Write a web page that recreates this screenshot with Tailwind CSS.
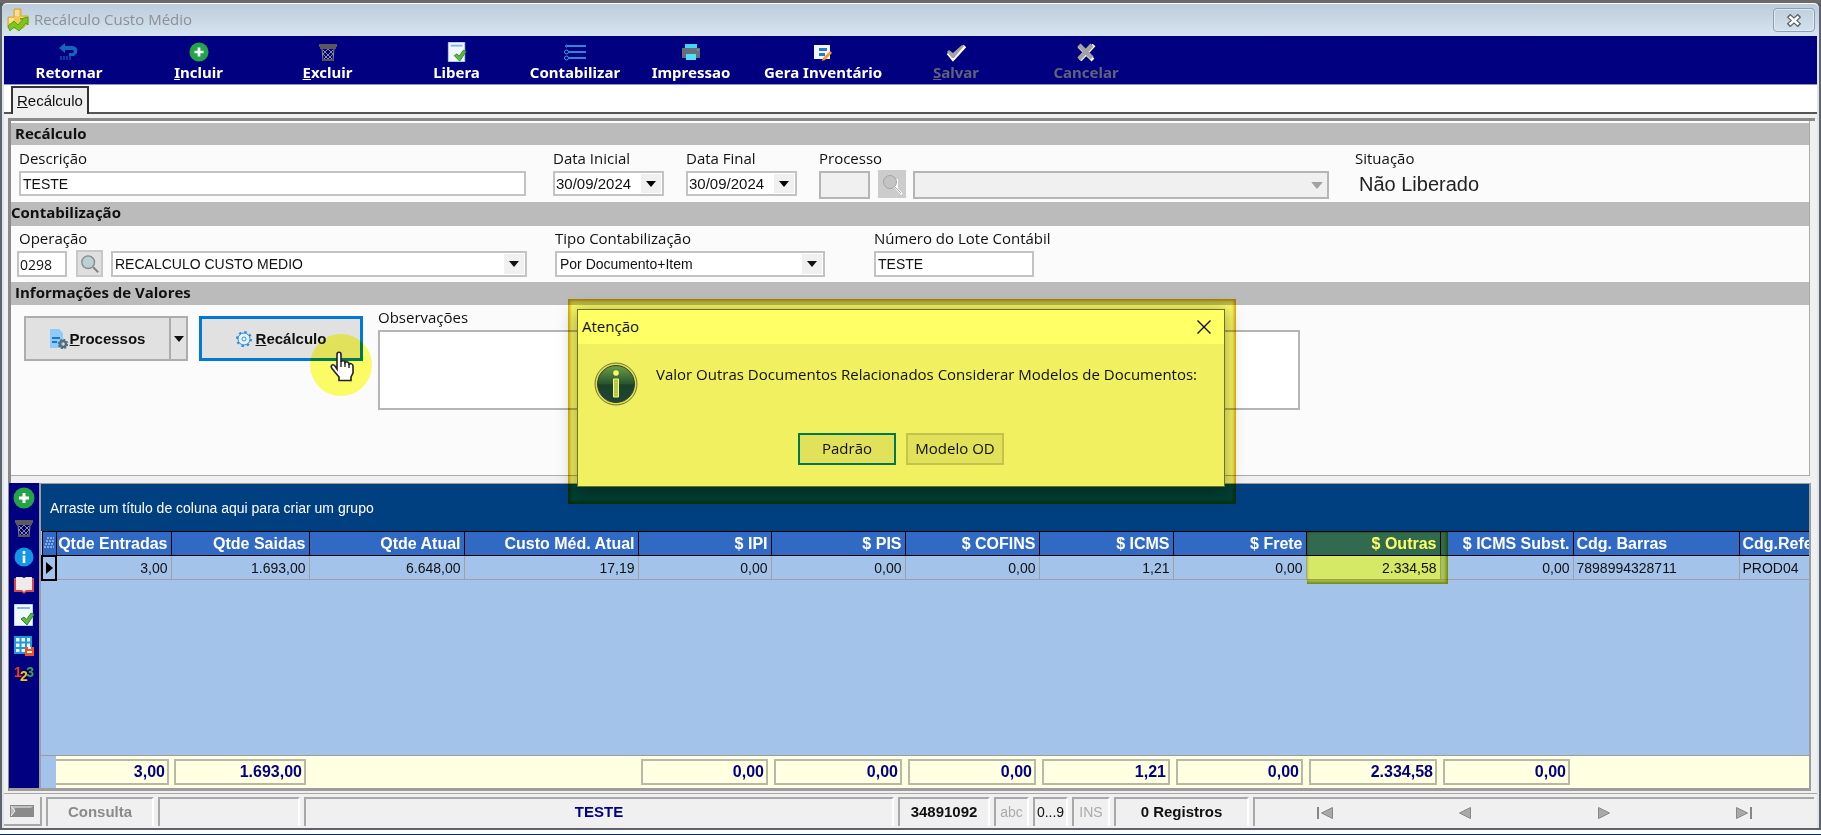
<!DOCTYPE html>
<html lang="pt-BR">
<head>
<meta charset="utf-8">
<meta name="viewport" content="width=device-width, initial-scale=1">
<title>Recálculo Custo Médio</title>
<script src="https://cdn.jsdelivr.net/npm/@tailwindcss/browser@4"></script>
</head>
<body class="bg-[#5d5d5d] font-['Liberation_Sans',sans-serif] text-sm text-[#101010]">

<svg class="hidden" aria-hidden="true">
  <symbol id="i-plus" viewBox="0 0 22 22"><circle cx="11" cy="11" r="10.5" fill="#22a447"/><path d="M11 6v10M6 11h10" stroke="#fff" stroke-width="3"/></symbol>
  <symbol id="i-bin" viewBox="0 0 20 20"><path d="M1 2h18v3h-1v2H2V5H1z" fill="#5a5a5a"/><path d="M4 7l1 11h10l1-11M5 8l9 9M15 8l-9 9M10 7l-5 5 5 5 5-5z" fill="none" stroke="#8c8c8c" stroke-width="1"/><path d="M4 18h12" stroke="#555" stroke-width="2"/></symbol>
  <symbol id="i-doc" viewBox="0 0 20 22"><path d="M.5.5h18v21H.5z" fill="#f2f8fd" stroke="#b5d5f0"/><path d="M3 4h13" stroke="#7db8ea" stroke-width="2"/><path d="M7 15l3-2 2.500 2.500L17 9l3 1.500-7 10.500z" fill="#5cb845" stroke="#2c8a25"/></symbol>
  <symbol id="i-lens" viewBox="0 0 22 22"><circle cx="9" cy="9" r="7" fill="#bcd0d2" stroke="#858c8e" stroke-width="1.500"/><path d="M14.500 14.500L20 20" stroke="#7c8486" stroke-width="2.200"/></symbol>
  <symbol id="i-down" viewBox="0 0 10 6"><path d="M0 0h10L5 6z" fill="currentColor"/></symbol>
  <symbol id="i-prev" viewBox="0 0 12 12"><path d="M11.500.5v11L.5 6z" fill="#a9a9a9" stroke="#878787"/></symbol>
</svg>

<div class="relative flex h-screen min-h-[780px] flex-col overflow-hidden border-t-[3px] border-[#6a6a6a]">
 <main class="flex min-h-0 flex-1 flex-col rounded-t-md border-x-2 border-b-2 border-[#60646a] bg-[#dbe5f0]">

  <header class="flex h-[33px] shrink-0 items-center rounded-t-md border-t border-white bg-linear-to-b from-[#bdccdb] to-[#d7e4f0] pl-1 pr-1">
    <svg class="h-6 w-6" viewBox="0 0 24 24"><path d="M8 1h7v7h7v7l-5 5H2V9h6z" fill="#f4c65a" stroke="#dca332"/><path d="M9 2h4v6H9zM3 10h5v5H3zM15 9h5v4h-5z" fill="#fbe092"/><path d="M2 18l6-5 4 4 5-6h-3l8-2v8l-2-2-7 8-5-4-4 4z" fill="#7bc51c" stroke="#5aa012"/></svg>
    <h1 class="ml-1 font-['Open_Sans',sans-serif] text-[15px] text-[#8b9096]">Recálculo Custo Médio</h1>
    <button aria-label="Fechar janela" class="ml-auto flex h-6 w-[42px] items-center justify-center rounded-sm border border-[#8e9fb5] shadow-[inset_0_0_0_1px_#dfe9f4]">
      <svg class="h-[13px] w-4" viewBox="0 0 16 13"><path d="M2.500 1.500l11 10M13.500 1.500l-11 10" stroke="#5a626e" stroke-width="5"/><path d="M3.500 2.500l9 8M12.500 2.500l-9 8" stroke="#fff" stroke-width="2.400"/></svg>
    </button>
  </header>

  <div class="mx-[2px] flex min-h-0 flex-1 flex-col bg-[#f0f0f0]">
  <nav aria-label="Ações" class="flex h-12 shrink-0 bg-[#000080] font-['Noto_Sans',sans-serif] text-[15px] font-bold text-white">
    <button class="flex w-[130px] flex-col items-center pt-[6px] leading-5"><svg class="h-5 w-5" viewBox="0 0 20 20"><path d="M6 1v3h7c5 0 6 4 5 7l-3 3H10v-3h4c1.500-1 1-3-1-3H6v3L0 6z" fill="#1565b8"/><path d="M2 14v4M5 14v4M8 14v4M11 14v4" stroke="#1565b8" stroke-width="1.200"/></svg>Retornar</button>
    <button class="flex w-[129px] flex-col items-center pt-[6px] leading-5"><svg class="h-5 w-5"><use href="#i-plus"/></svg><span><u>I</u>ncluir</span></button>
    <button class="flex w-[129px] flex-col items-center pt-[6px] leading-5"><svg class="h-5 w-5"><use href="#i-bin"/></svg><span><u>E</u>xcluir</span></button>
    <button class="flex w-[129px] flex-col items-center pt-[6px] leading-5"><svg class="h-5 w-5"><use href="#i-doc"/></svg>Libera</button>
    <button class="flex w-[108px] flex-col items-center pt-[6px] leading-5"><svg class="h-5 w-[22px]" viewBox="0 0 22 20"><path d="M2 4h20M5 10h17M5 16h17" stroke="#2e86d4" stroke-width="2"/><g fill="#000080" stroke="#4aa0e6"><circle cx="2.500" cy="4" r="1"/><circle cx="2.500" cy="10" r="2"/><circle cx="2.500" cy="16" r="2"/></g></svg>Contabilizar</button>
    <button class="flex w-[124px] flex-col items-center pt-[6px] leading-5"><svg class="h-5 w-5" viewBox="0 0 20 20"><path d="M4 2h12v4H4z" fill="#45d5f7"/><path d="M1 6h18v10H1z" fill="#66707a"/><path d="M5 12h10v6H5z" fill="#50e0fb"/><path d="M16 8h1.500" stroke="#45d5f7"/></svg>Impressao</button>
    <button class="flex w-[140px] flex-col items-center pt-[6px] leading-5"><svg class="h-5 w-5" viewBox="0 0 20 20"><path d="M1 3h16v14H1z" fill="#f3f7fc"/><path d="M6 6h8v3H6zM6 11h6v3H6z" fill="#1f7ad6"/><path d="M17 9l2 2-7 7-3 1 1-3z" fill="#ff9a1f"/></svg>Gera Inventário</button>
    <button disabled class="flex w-[126px] flex-col items-center pt-[6px] leading-5 text-[#616178]"><svg class="h-5 w-5" viewBox="0 0 20 20"><path d="M2 11l5 6L19 4" fill="none" stroke="#fff" stroke-width="3.500"/><path d="M1 10l2-2 4 3L16 3l2 1L8 16H6z" fill="#a3a3a3"/></svg><span><u>S</u>alvar</span></button>
    <button disabled class="flex w-[134px] flex-col items-center pt-[6px] leading-5 text-[#616178]"><svg class="h-5 w-5" viewBox="0 0 20 20"><path d="M3 4l14 14M18 3L4 18" stroke="#fff" stroke-width="4"/><path d="M3 3l13 13M16 3L3 17" stroke="#a3a3a3" stroke-width="4.500"/></svg>Cancelar</button>
  </nav>

  <div role="tablist" class="flex h-[30px] shrink-0 items-end border-b-2 border-[#555] border-t border-t-[#8f8fd6] bg-white pl-[7px]">
    <button role="tab" aria-selected="true" class="relative top-[2px] h-[28px] border-2 border-b-0 border-[#333] bg-[#f0f0f0] px-1 text-[15px]"><u>R</u>ecálculo</button>
  </div>

  <div class="mt-1 mr-[2px] ml-1 flex min-h-0 flex-1 flex-col border-t-[3px] border-l-[3px] border-[#8b8b8b]">
   <section class="mr-[5px] shrink-0 border-r border-b border-[#ababab] bg-[#fbfbfb] font-['Open_Sans',sans-serif] text-[15px]">
    <h2 class="mt-[2px] h-[22px] bg-[#bbb] pl-1 font-bold leading-5">Recálculo</h2>
    <div class="flex h-[57px] items-start pt-[2px] pl-2 leading-[22px]">
      <div class="w-[507px]"><label for="desc" class="block">Descrição</label>
        <input id="desc" value="TESTE" class="mt-[2px] h-[25px] w-full border-2 border-[#c3c3c3] bg-white px-[2px] font-['Liberation_Sans',sans-serif] text-sm"></div>
      <div class="ml-[27px] w-[111px]"><label for="di" class="block">Data Inicial</label>
        <div class="mt-[2px] flex h-[25px] border-2 border-[#c3c3c3] bg-white p-px"><input id="di" value="30/09/2024" class="w-[85px] font-['Liberation_Sans',sans-serif] text-[15px]"><button aria-label="Abrir data inicial" class="flex flex-1 items-center justify-center bg-[#f0f0f0]"><svg class="h-[6px] w-[10px] text-black"><use href="#i-down"/></svg></button></div></div>
      <div class="ml-[22px] w-[111px]"><label for="df" class="block">Data Final</label>
        <div class="mt-[2px] flex h-[25px] border-2 border-[#c3c3c3] bg-white p-px"><input id="df" value="30/09/2024" class="w-[85px] font-['Liberation_Sans',sans-serif] text-[15px]"><button aria-label="Abrir data final" class="flex flex-1 items-center justify-center bg-[#f0f0f0]"><svg class="h-[6px] w-[10px] text-black"><use href="#i-down"/></svg></button></div></div>
      <div class="ml-[22px] w-[510px]"><label for="proc" class="block">Processo</label>
        <div class="mt-px flex items-start"><input id="proc" disabled class="mt-px h-7 w-[51px] border-2 border-[#b5b5b5] bg-[#f0f0f0]">
        <button disabled aria-label="Buscar processo" class="ml-2 flex h-7 w-7 items-center justify-center bg-[#ccc]"><svg class="h-[22px] w-[22px]" viewBox="0 0 22 22"><path d="M16 6v8H9M15 15l6 6" fill="none" stroke="#fff" stroke-width="2"/><circle cx="9" cy="9" r="6.500" fill="#c4c4c4" stroke="#a5a5a5"/><path d="M14 14l6 6" stroke="#a5a5a5"/></svg></button>
        <div class="relative mt-px ml-[7px] flex-1"><select disabled aria-label="Nome do processo" class="h-7 w-full appearance-none border-2 border-[#b5b5b5] bg-[#f0f0f0]"></select><svg class="absolute top-[11px] right-[6px] h-[7px] w-3 text-[#a2a2a2]"><use href="#i-down"/></svg></div></div></div>
      <div class="ml-[26px]"><span class="block">Situação</span>
        <output class="mt-px ml-1 block w-[122px] overflow-hidden whitespace-nowrap font-['Liberation_Sans',sans-serif] text-xl leading-7 text-[#222]">Não Liberado</output></div>
    </div>

    <h2 class="h-6 bg-[#bbb] font-bold leading-5">Contabilização</h2>
    <div class="flex h-14 items-start pt-px pl-[6px] leading-[22px]">
      <div class="w-[510px]"><label for="op" class="block pl-[2px]">Operação</label>
        <div class="mt-px flex items-start"><input id="op" value="0298" class="mt-px h-[26px] w-[50px] border-2 border-[#c3c3c3] bg-white px-px text-sm">
        <button aria-label="Buscar operação" class="ml-[9px] flex h-[27px] w-[27px] items-center justify-center border-2 border-[#c8c8c8] bg-[#dfdfdf]"><svg class="h-5 w-5"><use href="#i-lens"/></svg></button>
        <div class="relative mt-px ml-2 flex-1"><select aria-label="Nome da operação" class="h-[26px] w-full appearance-none border-2 border-[#c3c3c3] bg-white px-[2px] font-['Liberation_Sans',sans-serif] text-sm"><option>RECALCULO CUSTO MEDIO</option></select><span class="pointer-events-none absolute top-[3px] right-[3px] flex h-5 w-5 items-center justify-center bg-[#f0f0f0]"><svg class="h-[6px] w-[10px]"><use href="#i-down"/></svg></span></div></div></div>
      <div class="ml-[28px] w-[270px]"><label for="tipo" class="block">Tipo Contabilização</label>
        <div class="relative mt-[2px]"><select id="tipo" class="h-[26px] w-full appearance-none border-2 border-[#c3c3c3] bg-white px-[3px] font-['Liberation_Sans',sans-serif] text-sm"><option>Por Documento+Item</option></select><span class="pointer-events-none absolute top-[3px] right-[3px] flex h-5 w-5 items-center justify-center bg-[#f0f0f0]"><svg class="h-[6px] w-[10px]"><use href="#i-down"/></svg></span></div></div>
      <div class="ml-[49px]"><label for="lote" class="block">Número do Lote Contábil</label>
        <input id="lote" value="TESTE" class="mt-[2px] h-[26px] w-[160px] border-2 border-[#c3c3c3] bg-white px-[2px] font-['Liberation_Sans',sans-serif] text-sm"></div>
    </div>

    <h2 class="h-[23px] bg-[#bbb] pl-1 font-bold leading-5">Informações de Valores</h2>
    <div class="flex h-[170px] items-start pl-[13px]">
      <div class="mt-[11px] flex h-[45px] w-[164px] border-2 border-[#adadad] bg-[#e1e1e1] font-['Liberation_Sans',sans-serif] text-[15px] font-bold">
        <button class="flex flex-1 items-center justify-center"><svg class="h-5 w-[18px]" viewBox="0 0 18 20"><path d="M0 0h9l4 4v15H0z" fill="#90caf9"/><path d="M2 9h8M2 13h5" stroke="#1976d2" stroke-width="2"/><circle cx="13" cy="15" r="3" fill="none" stroke="#546e7a" stroke-width="2.500"/><circle cx="13" cy="15" r="4.500" fill="none" stroke="#546e7a" stroke-width="1.500" stroke-dasharray="2 1.500"/></svg><span class="ml-[2px]"><u>P</u>rocessos</span></button>
        <button aria-label="Mais processos" class="flex w-[17px] items-center justify-center border-l-2 border-[#adadad]"><svg class="h-[6px] w-[10px]"><use href="#i-down"/></svg></button>
      </div>
      <div class="relative ml-[11px]">
        <button class="mt-[11px] flex h-[45px] w-[164px] items-center justify-center border-[3px] border-[#0078d7] bg-[#e1e1e1] font-['Liberation_Sans',sans-serif] text-[15px] font-bold"><svg class="mr-1 h-4 w-4" viewBox="0 0 16 16"><circle cx="8" cy="8" r="6" fill="#e4f2fc" stroke="#2d8de0" stroke-width="1"/><circle cx="8" cy="8" r="7" fill="none" stroke="#2d8de0" stroke-width="2" stroke-dasharray="2.500 3"/><circle cx="8" cy="8" r="2" fill="#fff" stroke="#2d8de0"/></svg><span><u>R</u>ecálculo</span></button>
        <div class="absolute top-[29px] left-[111px] h-[62px] w-[62px] rounded-full bg-[#ffff66] mix-blend-multiply"></div>
        <svg class="absolute top-[46px] left-[131px] h-[31px] w-6" viewBox="0 0 24 31"><path d="M7 18V3.500C7 .5 11 .5 11 3.500V11c1-2 4-1.500 4 .5 1.500-1.500 4-.5 4 1.500 1.500-1 4 0 4 2v7l-2 4v3.500H9V26L2 17.500c-2-3 1-5 3-2.500z" fill="#fff" stroke="#222" stroke-width="1.600"/><path d="M11 10v6M15 11v5M19 13v4" stroke="#222" stroke-width="1.400"/></svg>
      </div>
      <div class="ml-[15px] w-[922px] pt-px"><label for="obs" class="block leading-[22px]">Observações</label>
        <textarea id="obs" class="mt-[2px] block h-20 w-full resize-none border-2 border-[#b5b5b5] bg-white"></textarea></div>
    </div>
   </section>

   <div class="mt-[7px] mr-1 -ml-[2px] flex min-h-0 flex-1 border-r-2 border-b-[3px] border-[#9d9d9d]">
    <aside class="flex w-[30px] shrink-0 flex-col items-center gap-2 bg-[#000080] pt-1">
      <button aria-label="Incluir" class="h-[22px]"><svg class="h-[22px] w-[22px]"><use href="#i-plus"/></svg></button>
      <button aria-label="Excluir" class="flex h-[22px] items-center"><svg class="h-5 w-5"><use href="#i-bin"/></svg></button>
      <button aria-label="Informação" class="h-5"><svg class="h-5 w-5" viewBox="0 0 20 20"><circle cx="10" cy="10" r="9.500" fill="#1496e6"/><path d="M10 4v3M10 8.500V16" stroke="#fff" stroke-width="2.600"/></svg></button>
      <button aria-label="Livro" class="h-5"><svg class="h-5 w-5" viewBox="0 0 20 20"><path d="M0 3h20v14h-8l-2 2-2-2H0z" fill="#d44a4a"/><path d="M2 2h6l2 1 2-1h6v13h-6l-2 2-2-2H2z" fill="#efebe9"/></svg></button>
      <button aria-label="Liberar" class="h-6"><svg class="h-[22px] w-5"><use href="#i-doc"/></svg></button>
      <button aria-label="Salvar grade" class="h-[22px]"><svg class="h-5 w-5" viewBox="0 0 20 20"><path d="M1 1h16v16H1z" fill="#e8f5fc"/><path d="M1 1h16v16H1zM6.500 1v16M12 1v16M1 6.500h16M1 12h16" fill="none" stroke="#2196d8" stroke-width="2"/><path d="M11 11h9v9h-9z" fill="#f4511e"/><path d="M13 16h5M14 12h3" stroke="#fff" stroke-width="2"/></svg></button>
      <button aria-label="Ordenar" class="relative h-5 w-5 text-[14px] font-bold leading-none"><span class="absolute top-0 left-0 text-[#ff3d00]">1</span><span class="absolute top-0 right-0 text-[#43a047]">3</span><span class="absolute top-1 left-1.5 text-[#ffc107]">2</span></button>
    </aside>

    <div class="flex min-w-0 flex-1 flex-col overflow-hidden border-t border-l-2 border-[#9d9d9d] bg-[#a4c3eb]">
      <div class="flex h-[47px] shrink-0 items-center bg-[#004080] pl-[9px] text-white">Arraste um título de coluna aqui para criar um grupo</div>
      <table class="w-full shrink-0 table-fixed border-collapse text-right">
        <colgroup><col class="w-[14px]"><col class="w-[115px]"><col class="w-[138px]"><col class="w-[155px]"><col class="w-[174px]"><col class="w-[133px]"><col class="w-[134px]"><col class="w-[134px]"><col class="w-[134px]"><col class="w-[133px]"><col class="w-[134px]"><col class="w-[133px]"><col class="w-[166px]"><col></colgroup>
        <thead><tr class="h-6 whitespace-nowrap bg-[#316ac5] text-[16px] leading-[22px] text-white">
          <th class="border border-black p-0" aria-label="Indicador"><svg class="mx-auto h-[14px] w-[10px]" viewBox="0 0 10 14"><path d="M3 2h7M2 5h8M1 8h9M0 11h10" stroke="#dce8ff" stroke-dasharray="2 1"/></svg></th>
          <th class="border border-black p-0 pr-[3px]">Qtde Entradas</th><th class="border border-black p-0 pr-[3px]">Qtde Saidas</th><th class="border border-black p-0 pr-[3px]">Qtde Atual</th><th class="border border-black p-0 pr-[3px]">Custo Méd. Atual</th><th class="border border-black p-0 pr-[3px]">$ IPI</th><th class="border border-black p-0 pr-[3px]">$ PIS</th><th class="border border-black p-0 pr-[3px]">$ COFINS</th><th class="border border-black p-0 pr-[3px]">$ ICMS</th><th class="border border-black p-0 pr-[3px]">$ Frete</th>
          <th class="relative border border-black p-0 pr-[3px]">$ Outras<span class="absolute top-0 left-0 h-[52px] w-[141px] bg-[#ffff66] shadow-[inset_-1px_-1px_3px_1px_#b8b000] mix-blend-multiply"></span></th>
          <th class="border border-black p-0 pr-[3px]">$ ICMS Subst.</th><th class="border border-black p-0 pl-[3px] text-left">Cdg. Barras</th><th class="border border-r-0 border-black p-0 pl-[3px] text-left">Cdg.Refe</th>
        </tr></thead>
        <tbody><tr class="h-6 leading-5">
          <td class="border-2 border-black p-0"><svg class="mx-auto h-3 w-[7px]" viewBox="0 0 7 12"><path d="M0 0l7 6-7 6z"/></svg></td>
          <td class="border border-[#a0a0a0] p-0 pr-[3px]">3,00</td><td class="border border-[#a0a0a0] p-0 pr-[3px]">1.693,00</td><td class="border border-[#a0a0a0] p-0 pr-[3px]">6.648,00</td><td class="border border-[#a0a0a0] p-0 pr-[3px]">17,19</td><td class="border border-[#a0a0a0] p-0 pr-[3px]">0,00</td><td class="border border-[#a0a0a0] p-0 pr-[3px]">0,00</td><td class="border border-[#a0a0a0] p-0 pr-[3px]">0,00</td><td class="border border-[#a0a0a0] p-0 pr-[3px]">1,21</td><td class="border border-[#a0a0a0] p-0 pr-[3px]">0,00</td><td class="border border-[#a0a0a0] bg-[#d6e9ff] p-0 pr-[3px]">2.334,58</td><td class="border border-[#a0a0a0] p-0 pr-[3px]">0,00</td><td class="border border-[#a0a0a0] p-0 pl-[3px] text-left">7898994328711</td><td class="border border-r-0 border-[#a0a0a0] p-0 pl-[3px] text-left">PROD04</td>
        </tr></tbody>
      </table>
      <div class="mt-auto flex h-[33px] shrink-0 items-stretch border-t border-[#9d9d9d] bg-[#ffffe1] text-right text-[16px] font-bold leading-[21px] text-[#000080]">
        <div class="w-[15px] bg-[#a4c3eb]"></div>
        <div class="w-[115px] py-[3px] pr-[2px]"><div class="h-[26px] border-2 border-l-0 border-[#b8b8a8] pr-[2px]">3,00</div></div>
        <div class="w-[138px] px-[3px] py-[3px]"><div class="h-[26px] border-2 border-[#b8b8a8] pr-[2px]">1.693,00</div></div>
        <div class="w-[329px]"></div>
        <div class="w-[133px] p-[3px]"><div class="h-[26px] border-2 border-[#b8b8a8] pr-[2px]">0,00</div></div>
        <div class="w-[134px] p-[3px]"><div class="h-[26px] border-2 border-[#b8b8a8] pr-[2px]">0,00</div></div>
        <div class="w-[134px] p-[3px]"><div class="h-[26px] border-2 border-[#b8b8a8] pr-[2px]">0,00</div></div>
        <div class="w-[134px] p-[3px]"><div class="h-[26px] border-2 border-[#b8b8a8] pr-[2px]">1,21</div></div>
        <div class="w-[133px] p-[3px]"><div class="h-[26px] border-2 border-[#b8b8a8] pr-[2px]">0,00</div></div>
        <div class="w-[134px] p-[3px]"><div class="h-[26px] border-2 border-[#b8b8a8] pr-[2px]">2.334,58</div></div>
        <div class="w-[133px] p-[3px]"><div class="h-[26px] border-2 border-[#b8b8a8] pr-[2px]">0,00</div></div>
      </div>
    </div>
   </div>
  </div>

  <footer class="mt-[2px] flex h-[35px] shrink-0 gap-1 border-t border-[#a8a8a8] pt-[3px] pb-[2px] text-center text-[15px] leading-[26px]">
    <button aria-label="Painel" class="flex w-[38px] items-center justify-center border-r-2 border-b-2 border-[#a8a8a8]"><svg class="h-3 w-6" viewBox="0 0 24 12"><path d="M0 0h24v12H0z" fill="#8a8a8a"/><path d="M1 1h22l-2 2H5L3 9 1 11z" fill="#c0c0c0"/><path d="M1 1l4 5-4 5" fill="none" stroke="#eee"/></svg></button>
    <div class="w-[108px] border-t-2 border-l-2 border-r-2 border-[#a8a8a8] border-r-white font-bold text-[#8a8a8a]">Consulta</div>
    <div class="w-[142px] border-t-2 border-l-2 border-r-2 border-[#a8a8a8] border-r-white"></div>
    <div class="flex-1 border-t-2 border-l-2 border-r-2 border-[#a8a8a8] border-r-white font-bold text-[#000080]">TESTE</div>
    <div class="w-[92px] border-t-2 border-l-2 border-r-2 border-[#a8a8a8] border-r-white font-bold">34891092</div>
    <div class="w-[35px] border-t-2 border-l-2 border-r-2 border-[#a8a8a8] border-r-white text-sm leading-[27px] text-[#aaa]">abc</div>
    <div class="w-[35px] border-t-2 border-l-2 border-r-2 border-[#a8a8a8] border-r-white text-sm leading-[27px]">0...9</div>
    <div class="w-[38px] border-t-2 border-l-2 border-r-2 border-[#a8a8a8] border-r-white text-sm leading-[27px] text-[#aaa]">INS</div>
    <div class="w-[135px] border-t-2 border-l-2 border-r-2 border-[#a8a8a8] border-r-white font-bold">0 Registros</div>
    <div class="mr-[3px] grid w-[561px] grid-cols-4 border-t-2 border-l-2 border-[#a8a8a8]">
      <button aria-label="Primeiro" class="flex items-center justify-center"><svg class="h-3 w-4" viewBox="0 0 16 12"><path d="M1 0v12" stroke="#878787" stroke-width="2"/><path d="M15.500.5v11L4.500 6z" fill="#a9a9a9" stroke="#878787"/></svg></button>
      <button aria-label="Anterior" class="flex items-center justify-center"><svg class="h-3 w-3"><use href="#i-prev"/></svg></button>
      <button aria-label="Próximo" class="flex items-center justify-center"><svg class="h-3 w-3 -scale-x-100"><use href="#i-prev"/></svg></button>
      <button aria-label="Último" class="flex items-center justify-center"><svg class="h-3 w-4" viewBox="0 0 16 12"><path d="M15 0v12" stroke="#878787" stroke-width="2"/><path d="M.5.5v11L11.500 6z" fill="#a9a9a9" stroke="#878787"/></svg></button>
    </div>
  </footer>
  </div>
 </main>
 <div class="h-[5px] shrink-0 border-b border-[#0b2f66] bg-white"></div>

 <div role="dialog" aria-labelledby="dlg-title" class="absolute top-[306px] left-[577px] flex h-[178px] w-[648px] flex-col border border-[#707070] bg-[#f0f0f0] font-['Open_Sans',sans-serif] text-[15px] shadow-[0_4px_16px_2px_rgba(0,0,0,0.35)]">
   <div class="flex h-[34px] items-center bg-white pr-[13px] pl-1"><h2 id="dlg-title">Atenção</h2><button aria-label="Fechar" class="ml-auto"><svg class="h-[14px] w-[14px]" viewBox="0 0 14 14"><path d="M.5.5l13 13M13.500.5l-13 13" stroke="#111" stroke-width="1.400"/></svg></button></div>
   <div class="flex items-start pt-[18px] pl-4">
     <svg class="h-11 w-11" viewBox="0 0 44 44"><defs><linearGradient id="g" x2="0" y2="1"><stop stop-color="#6f9fb0"/><stop offset=".5" stop-color="#255478"/><stop offset=".52" stop-color="#1a4170"/><stop offset="1" stop-color="#20448a"/></linearGradient></defs><circle cx="22" cy="22" r="21" fill="#d8dde0" stroke="#777"/><circle cx="22" cy="22" r="18.500" fill="url(#g)" stroke="#345"/><circle cx="22" cy="11" r="2.800" fill="#fff"/><path d="M19.500 17h5v18h-5z" fill="#b8c6cc" stroke="#fff"/></svg>
     <p class="ml-[18px] whitespace-nowrap leading-6">Valor Outras Documentos Relacionados Considerar Modelos de Documentos:</p>
   </div>
   <div class="mt-auto mb-[21px] flex gap-[10px] pl-[220px]">
     <button class="h-8 w-[98px] border-2 border-[#0078d7] bg-[#e1e1e1]">Padrão</button>
     <button class="h-8 w-[98px] border-2 border-[#c3c3c3] bg-[#e1e1e1]">Modelo OD</button>
   </div>
 </div>
 <div class="pointer-events-none absolute top-[296px] left-[568px] h-[205px] w-[668px] bg-[#ffff66] shadow-[inset_0_0_3px_2px_#dca800] mix-blend-multiply"></div>
</div>
</body>
</html>
